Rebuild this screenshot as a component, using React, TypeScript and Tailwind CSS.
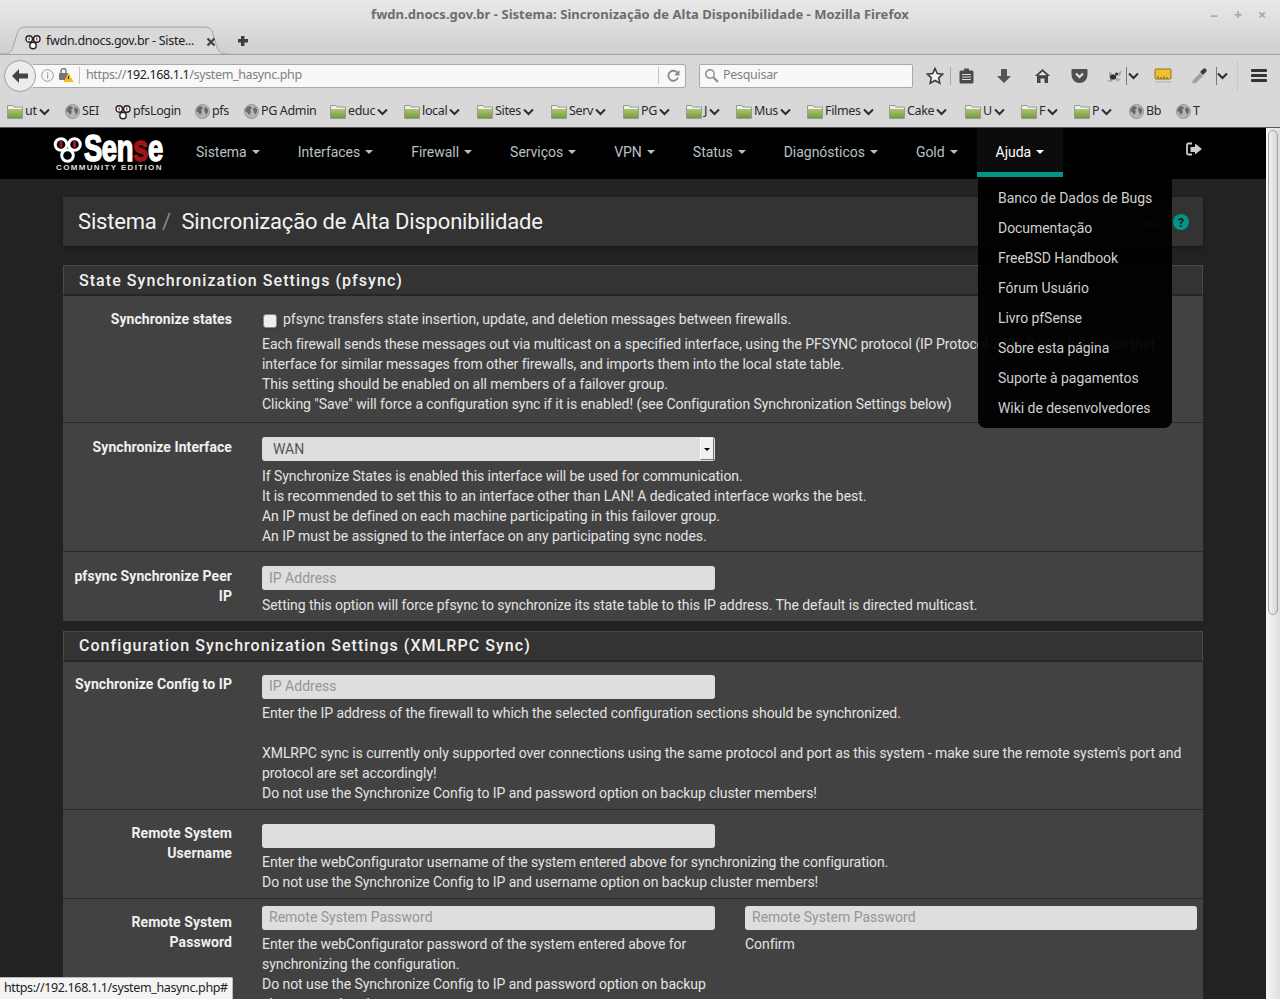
import { Fragment, type ReactNode } from "react";

const bookmarks = [
  { name: "ut", kind: "folder", w: "w-[58px]" },
  { name: "SEI", kind: "globe", w: "w-[50px]" },
  { name: "pfsLogin", kind: "pf", w: "w-[80px]" },
  { name: "pfs", kind: "globe", w: "w-[49px]" },
  { name: "PG Admin", kind: "globe", w: "w-[86px]" },
  { name: "educ", kind: "folder", w: "w-[74px]" },
  { name: "local", kind: "folder", w: "w-[73px]" },
  { name: "Sites", kind: "folder", w: "w-[74px]" },
  { name: "Serv", kind: "folder", w: "w-[72px]" },
  { name: "PG", kind: "folder", w: "w-[63px]" },
  { name: "J", kind: "folder", w: "w-[50px]" },
  { name: "Mus", kind: "folder", w: "w-[71px]" },
  { name: "Filmes", kind: "folder", w: "w-[82px]" },
  { name: "Cake", kind: "folder", w: "w-[76px]" },
  { name: "U", kind: "folder", w: "w-[56px]" },
  { name: "F", kind: "folder", w: "w-[53px]" },
  { name: "P", kind: "folder", w: "w-[55px]" },
  { name: "Bb", kind: "globe", w: "w-[47px]" },
  { name: "T", kind: "globe", w: "w-[30px]" },
];

const navItems = ["Sistema", "Interfaces", "Firewall", "Serviços", "VPN", "Status", "Diagnósticos", "Gold"];

const helpItems = [
  "Banco de Dados de Bugs",
  "Documentação",
  "FreeBSD Handbook",
  "Fórum Usuário",
  "Livro pfSense",
  "Sobre esta página",
  "Suporte à pagamentos",
  "Wiki de desenvolvedores",
];

function Folder() {
  return (
    <svg width="16" height="15" viewBox="0 0 16 15" className="shrink-0">
      <defs>
        <linearGradient id="fold" x1="0" y1="0" x2="0" y2="1">
          <stop offset="0" stopColor="#a9c772" />
          <stop offset="1" stopColor="#76993f" />
        </linearGradient>
      </defs>
      <path d="M0.500 1.500h5.500l1 1.500h8.500v11.500H0.500z" fill="#eeeeea" stroke="#9a9a92" />
      <rect x="1" y="5" width="14" height="9" fill="url(#fold)" />
    </svg>
  );
}

function Globe() {
  return (
    <svg width="15" height="15" viewBox="0 0 15 15" className="shrink-0">
      <circle cx="7.500" cy="7.500" r="7" fill="#b4b4b4" stroke="#828282" strokeWidth="0.700" />
      <path d="M3 3l3-1 2 2-2 2 1 2-2 3-2-3-2-1zM10 3l3 2v3l-2 3-1-3-1-2z" fill="#6a6a6a" />
    </svg>
  );
}

function PfLogo({ size = 16 }: { size?: number }) {
  return (
    <svg width={size} height={size} viewBox="0 0 16 16" className="shrink-0">
      <circle cx="4.200" cy="5" r="3.200" fill="#fff" stroke="#222" strokeWidth="1.400" />
      <circle cx="11.800" cy="5" r="3.200" fill="#fff" stroke="#222" strokeWidth="1.400" />
      <circle cx="8" cy="11.500" r="3.200" fill="#fff" stroke="#222" strokeWidth="1.400" />
      <rect x="3.600" y="3.400" width="1.200" height="3" fill="#b02020" />
      <rect x="11.200" y="3.400" width="1.200" height="3" fill="#b02020" />
    </svg>
  );
}

function Chevron() {
  return (
    <svg width="11" height="8" viewBox="0 0 11 8" className="shrink-0">
      <path d="M1 1.500l4.500 4.500 4.500-4.500" fill="none" stroke="#2c2c2c" strokeWidth="2" />
    </svg>
  );
}

function BrowserChrome() {
  return (
    <div className="font-['Noto_Sans',sans-serif] text-[#333]">
      {/* title + tab strip */}
      <div className="relative h-[55px] border-b border-[#a3a3a3] bg-gradient-to-b from-[#e9e9e9] to-[#cfcfcf]">
        <div className="pt-[6px] text-center text-[13px] leading-[17px] font-bold tracking-[0.03px] text-[#6d6d6d]">
          fwdn.dnocs.gov.br - Sistema: Sincronização de Alta Disponibilidade - Mozilla Firefox
        </div>
        <div className="absolute top-[7px] right-[6px] flex text-[15px] leading-[15px] font-bold text-[#a8a8a8]">
          <span className="w-[24px] text-center">–</span>
          <span className="w-[24px] text-center">+</span>
          <span className="w-[24px] text-center">×</span>
        </div>
        <svg width="230" height="29" viewBox="0 0 230 29" className="absolute top-[26px] left-0">
          <path
            d="M0 28h4c6 0 8-3 10-10l3-10c1-5 4-7 9-7h178c5 0 8 2 9 7l3 10c2 7 4 10 10 10h32"
            fill="#d9d9d9"
            stroke="#a3a3a3"
          />
        </svg>
        <div className="absolute top-[33px] left-[25px] flex h-[17px] items-center text-[12.500px] whitespace-nowrap text-[#222]">
          <PfLogo />
          <span className="ml-[5px] w-[160px] tracking-[-0.3px]">fwdn.dnocs.gov.br - Siste...</span>
          <svg width="10" height="10" viewBox="0 0 10 10">
            <path d="M1.500 1.500l7 7M8.500 1.500l-7 7" stroke="#444" strokeWidth="2.200" />
          </svg>
        </div>
        <svg width="12" height="12" viewBox="0 0 12 12" className="absolute top-[35px] left-[237px]">
          <path d="M4 1h3.400v3H11v3.600H7.400V11H4V7.600H1V4h3z" fill="#3e3e3e" />
        </svg>
      </div>

      {/* url bar row */}
      <div className="flex h-[41px] items-center bg-[#d8d8d8] pr-[12px]">
        <div className="z-10 ml-[4px] flex h-[32px] w-[32px] shrink-0 items-center justify-center rounded-full border border-[#9e9e9e] bg-[#ececec]">
          <svg width="18" height="16" viewBox="0 0 18 16">
            <path d="M8 1L1 8l7 7v-4.500h9v-5H8z" fill="#444" />
          </svg>
        </div>
        <div className="-ml-[3px] flex h-[24px] w-[653px] items-center rounded-r-[3px] border border-l-0 border-[#a9a9a9] bg-[#f8f8f8] pl-[8px] text-[12.500px]">
          <svg width="13" height="13" viewBox="0 0 13 13" className="shrink-0">
            <circle cx="6.500" cy="6.500" r="5.800" fill="none" stroke="#999" />
            <rect x="6" y="5.500" width="1.200" height="4" fill="#999" />
            <rect x="6" y="3.300" width="1.200" height="1.300" fill="#999" />
          </svg>
          <svg width="15" height="15" viewBox="0 0 15 15" className="ml-[5px] shrink-0">
            <rect x="0" y="5" width="9" height="7" rx="1" fill="#777" />
            <path d="M2 5V3a2.500 2.500 0 0 1 5 0v2" fill="none" stroke="#777" strokeWidth="1.400" />
            <path d="M9.500 5l5 9h-10z" fill="#f5b81d" />
            <rect x="9" y="8" width="1" height="3" fill="#333" />
          </svg>
          <span className="ml-[5px] h-[17px] border-l border-[#c4c4c4]" />
          <span className="ml-[6px] w-[572px] tracking-[-0.37px] text-[#808080]">
            https://<span className="text-[#222]">192.168.1.1</span>/system_hasync.php
          </span>
          <span className="h-[17px] border-l border-[#c4c4c4]" />
          <svg width="13" height="13" viewBox="0 0 13 13" className="ml-[8px]">
            <path d="M11 5a5 5 0 1 0 0 3.500" fill="none" stroke="#8a8a8a" strokeWidth="1.800" />
            <path d="M12.500 1v5.500H7z" fill="#8a8a8a" />
          </svg>
        </div>
        <div className="ml-[13px] flex h-[24px] w-[214px] items-center rounded-[2px] border border-[#a9a9a9] bg-[#f8f8f8] pl-[4px] text-[12.500px] tracking-[-0.3px] text-[#808080]">
          <svg width="15" height="15" viewBox="0 0 15 15">
            <circle cx="6" cy="6" r="4.200" fill="none" stroke="#8a8a8a" strokeWidth="1.400" />
            <path d="M9 9l5 5" stroke="#8a8a8a" strokeWidth="2" />
          </svg>
          <span className="ml-[4px]">Pesquisar</span>
        </div>
        <div className="ml-[13px] h-full flex-1">
          <ToolbarIcons />
        </div>
      </div>

      {/* bookmarks */}
      <div className="flex h-[32px] items-center border-b border-[#555] bg-[#d8d8d8] pl-[7px] text-[12.500px] tracking-[-0.35px] text-[#2a2a2a]">
        {bookmarks.map((b) => (
          <div key={b.name} className={`flex shrink-0 items-center gap-[2px] ${b.w}`}>
            {b.kind === "folder" && <Folder />}
            {b.kind === "globe" && <Globe />}
            {b.kind === "pf" && <PfLogo />}
            <span>{b.name}</span>
            {b.kind === "folder" && <Chevron />}
          </div>
        ))}
      </div>
    </div>
  );
}

function ToolbarIcons() {
  return (
    <div className="flex h-full items-center">
      <svg width="18" height="18" viewBox="0 0 18 18" className="shrink-0">
        <path
          d="M9 1.500l2.300 5 5.400.6-4 3.700 1.100 5.400L9 13.500l-4.800 2.700 1.100-5.400-4-3.700 5.400-.6z"
          fill="#f4f4f4"
          stroke="#3c3c3c"
          strokeWidth="1.600"
        />
      </svg>
      <span className="ml-[6px] h-[18px] border-l border-[#a8a8a8]" />
      <svg width="15" height="16" viewBox="0 0 15 16" className="ml-[8px] shrink-0">
        <rect x="0.500" y="2.500" width="14" height="13" rx="1.500" fill="#4a4a4a" />
        <rect x="5" y="0.500" width="5" height="3" fill="#4a4a4a" />
        <path d="M3 6.500h9M3 9h9M3 11.500h9" stroke="#dcdcdc" strokeWidth="1.100" />
      </svg>
      <svg width="16" height="16" viewBox="0 0 16 16" className="ml-[22px] shrink-0">
        <path d="M5 1h6v7h4l-7 7-7-7h4z" fill="#555" />
      </svg>
      <svg width="17" height="16" viewBox="0 0 17 16" className="ml-[22px] shrink-0">
        <path d="M8.500 1L0.800 8h2.200v7h3.500v-4.500h4V15H14V8h2.200z" fill="#444" />
        <path d="M8.500 3.500L4.500 7.200h8z" fill="#e8e8e8" />
      </svg>
      <svg width="17" height="15" viewBox="0 0 17 15" className="ml-[20px] shrink-0">
        <path d="M1.500 1h14a1 1 0 0 1 1 1v5a8 8 0 0 1-16 0V2a1 1 0 0 1 1-1z" fill="#505050" />
        <path d="M5 5.500l3.500 3.500L12 5.500" fill="none" stroke="#e6e6e6" strokeWidth="2" />
      </svg>
      <svg width="17" height="14" viewBox="0 0 17 14" className="ml-[18px] shrink-0">
        <path d="M9 6l7-5-2 6zM8 6L3 2l0 5zM9 9l6 1-4 3zM7 9l-6 3 5 1z" fill="#a8a8a8" />
        <ellipse cx="7" cy="8" rx="3.200" ry="2.600" fill="#2f2f2f" />
        <circle cx="10.500" cy="5" r="1.500" fill="#2f2f2f" />
      </svg>
      <span className="ml-[3px] h-[18px] border-l border-[#777]" />
      <span className="ml-[1px]">
        <Chevron />
      </span>
      <svg width="18" height="15" viewBox="0 0 18 15" className="ml-[15px] shrink-0">
        <rect x="1" y="1" width="16" height="10" rx="1" fill="#f2bf2e" stroke="#8c7426" />
        <path d="M4 11V8M7 11V9M10 11V8M13 11V9" stroke="#7a5b0e" />
        <rect x="1" y="13" width="16" height="1.500" fill="#bbb" />
      </svg>
      <svg width="18" height="18" viewBox="0 0 18 18" className="ml-[19px] shrink-0">
        <path d="M2 16l-1 1 1-4 7-7 3 3-7 7z" fill="#a0a0a0" />
        <path d="M9 5l3-3c1-1 2-1 3 0s1 2 0 3l-3 3z" fill="#3c3c3c" />
      </svg>
      <span className="ml-[7px] h-[18px] border-l border-[#777]" />
      <Chevron />
      <span className="ml-[9px] h-[30px] border-l border-[#c6c6c6]" />
      <div className="ml-[13px] flex flex-col gap-[2px]">
        <div className="h-[3px] w-[16px] rounded-[1px] bg-[#333]" />
        <div className="h-[3px] w-[16px] rounded-[1px] bg-[#333]" />
        <div className="h-[3px] w-[16px] rounded-[1px] bg-[#333]" />
      </div>
    </div>
  );
}

function Caret() {
  return <span className="ml-[5px] inline-block border-x-[4px] border-t-[4px] border-x-transparent border-t-current align-middle" />;
}

function Navbar() {
  return (
    <div className="flex h-[51px] bg-black text-[14px] tracking-[-0.03px] text-[#b8c0c4]">
      <div className="flex w-[177px] shrink-0 justify-end pr-[14px]">
        <div className="relative h-full w-[110px] shrink-0">
          <svg width="30" height="28" viewBox="0 0 30 28" className="absolute top-[8px] left-0">
            <circle cx="8" cy="8.500" r="5.800" fill="none" stroke="#fff" strokeWidth="3" />
            <circle cx="21.500" cy="8.500" r="5.800" fill="none" stroke="#fff" strokeWidth="3" />
            <circle cx="14.500" cy="19.500" r="5.800" fill="none" stroke="#fff" strokeWidth="3" />
            <rect x="6.500" y="5" width="3" height="6.500" fill="#a01515" />
            <rect x="20" y="5" width="3" height="6.500" fill="#a01515" />
          </svg>
          <span className="absolute top-[8px] left-[31px] origin-left scale-x-[0.76] font-['Liberation_Sans',sans-serif] text-[36px] leading-[26px] font-bold tracking-[-0.500px] text-white [-webkit-text-stroke:1.500px_white]">
            Sen<span className="text-[#a01515] [-webkit-text-stroke:1.500px_#a01515]">s</span>e
          </span>
          <span className="absolute top-[35px] left-[3px] font-['Liberation_Sans',sans-serif] text-[8px] leading-[10px] font-bold tracking-[1.35px] whitespace-nowrap text-[#ddd]">
            COMMUNITY EDITION
          </span>
        </div>
      </div>
      {navItems.map((item) => (
        <div key={item} className="flex h-full items-center px-[19px] pb-[3px]">
          {item}
          <Caret />
        </div>
      ))}
      <div className="flex h-[49px] items-center border-b-[5px] border-[#009688] bg-[#0c0c0c] px-[19px] pt-[4px] text-white">
        Ajuda
        <Caret />
      </div>
      <div className="ml-auto pt-[14px] pr-[64px]">
        <svg width="16" height="15" viewBox="0 0 16 15">
          <path d="M6 1.500H2.500a1.500 1.500 0 0 0-1.500 1.500v8a1.500 1.500 0 0 0 1.500 1.500H6" fill="none" stroke="#ccc" strokeWidth="1.800" />
          <path d="M9 1.500L16 7l-7 5.500V10H4.500V5H9z" fill="#ccc" />
        </svg>
      </div>
    </div>
  );
}

function Input({ placeholder = "", className = "w-[453px] leading-[24px]" }: { placeholder?: string; className?: string }) {
  return (
    <div className={`h-[24px] rounded-[3px] bg-[#dedede] pl-[7px] text-[14px] tracking-normal text-[#969696] ${className}`}>
      {placeholder}
    </div>
  );
}

function Row({
  label,
  children,
  className = "",
  labelPt = "pt-[14px]",
  bodyPt = "pt-[14px]",
}: {
  label: ReactNode;
  children: ReactNode;
  className?: string;
  labelPt?: string;
  bodyPt?: string;
}) {
  return (
    <div className={`flex border-t border-[#2a2a2a] ${className}`}>
      <div className={`w-[169px] shrink-0 text-right font-bold tracking-[0.07px] text-[#f0f0f0] ${labelPt}`}>{label}</div>
      <div className={`min-w-0 flex-1 pl-[30px] ${bodyPt}`}>{children}</div>
    </div>
  );
}

function Lines({ lines }: { lines: string[] }) {
  return (
    <>
      {lines.map((line, i) => (
        <Fragment key={i}>
          {line}
          {i < lines.length - 1 && <br />}
        </Fragment>
      ))}
    </>
  );
}

function PanelHeader({ children, className = "h-[31px] leading-[29px]" }: { children: ReactNode; className?: string }) {
  return (
    <div className={`border border-b-2 border-[#4a4a4a] border-b-[#262626] bg-[#333] pl-[15px] text-[16px] font-medium tracking-[1.05px] text-[#f0f0f0] ${className}`}>
      {children}
    </div>
  );
}

function PageContent() {
  return (
    <div className="relative h-full flex-1 overflow-hidden bg-[#222] font-['Roboto',sans-serif] text-[14px] leading-[20px] tracking-[-0.06px] text-[#e2e2e2]">
      <Navbar />
      <div className="ml-[63px] w-[1140px] pt-[18px]">
        {/* breadcrumb */}
        <div className="flex h-[49px] items-center justify-between bg-[#333] pr-[14px] pl-[15px] text-[22px] tracking-[-0.18px] text-[#f2f2f2] shadow-[0_2px_4px_rgba(0,0,0,0.35)]">
          <div>
            Sistema <span className="text-[#8a8a8a]">/</span>&nbsp; Sincronização de Alta Disponibilidade
          </div>
          <div className="flex items-center gap-[13px]">
            <svg width="18" height="15" viewBox="0 0 18 15">
              <path d="M0 14h18M2 8h2.500v5H2zM6 5h2.500v8H6zM10 7h2.500v6H10zM14 3h2.500v10H14z" fill="#009688" stroke="#009688" strokeWidth="0.500" />
            </svg>
            <svg width="16" height="16" viewBox="0 0 16 16">
              <circle cx="8" cy="8" r="8" fill="#009688" />
              <text x="8" y="12.500" textAnchor="middle" fontSize="12" fontWeight="900" fill="#222" fontFamily="Roboto, sans-serif">?</text>
            </svg>
          </div>
        </div>

        {/* pfsync panel */}
        <div className="mt-[19px]">
          <PanelHeader>State Synchronization Settings (pfsync)</PanelHeader>
          <div className="bg-[#424242]">
            <Row label="Synchronize states" className="h-[126px] border-t-0" labelPt="pt-[13px]" bodyPt="pt-[13px]">
              <div className="flex h-[25px] items-start">
                <span className="mt-[5px] ml-[1px] h-[14px] w-[14px] shrink-0 rounded-[3px] border border-[#888] bg-[#eee] shadow-sm" />
                <span className="pl-[6px] tracking-[-0.02px]">pfsync transfers state insertion, update, and deletion messages between firewalls.</span>
              </div>
              <div className="whitespace-nowrap">
                <Lines
                  lines={[
                    "Each firewall sends these messages out via multicast on a specified interface, using the PFSYNC protocol (IP Protocol 240). It also listens on that",
                    "interface for similar messages from other firewalls, and imports them into the local state table.",
                    "This setting should be enabled on all members of a failover group.",
                    'Clicking "Save" will force a configuration sync if it is enabled! (see Configuration Synchronization Settings below)',
                  ]}
                />
              </div>
            </Row>
            <Row label="Synchronize Interface" className="h-[129px]">
              <div className="flex h-[24px] w-[453px] items-center justify-between rounded-[3px] bg-[#dedede] pr-[1px] pl-[11px] text-[14px] text-[#555]">
                <span>WAN</span>
                <span className="flex h-[22px] w-[14px] items-center justify-center border border-[#777] border-t-white border-l-white bg-[#f0f0f0]">
                  <span className="border-x-[3px] border-t-[3px] border-x-transparent border-t-black" />
                </span>
              </div>
              <div className="pt-[5px]">
                <Lines
                  lines={[
                    "If Synchronize States is enabled this interface will be used for communication.",
                    "It is recommended to set this to an interface other than LAN! A dedicated interface works the best.",
                    "An IP must be defined on each machine participating in this failover group.",
                    "An IP must be assigned to the interface on any participating sync nodes.",
                  ]}
                />
              </div>
            </Row>
            <Row
              label={
                <>
                  pfsync Synchronize Peer
                  <br />
                  IP
                </>
              }
              className="h-[70px]"
            >
              <Input placeholder="IP Address" />
              <div className="pt-[5px]">
                Setting this option will force pfsync to synchronize its state table to this IP address. The default is directed multicast.
              </div>
            </Row>
          </div>
        </div>

        {/* xmlrpc panel */}
        <div className="mt-[10px]">
          <PanelHeader className="h-[31px] leading-[27px]">Configuration Synchronization Settings (XMLRPC Sync)</PanelHeader>
          <div className="bg-[#424242]">
            <Row label="Synchronize Config to IP" className="h-[147px] border-t-0" labelPt="pt-[12px]" bodyPt="pt-[13px]">
              <Input placeholder="IP Address" className="w-[453px] leading-[22px]" />
              <div className="pt-[4px]">
                <Lines
                  lines={[
                    "Enter the IP address of the firewall to which the selected configuration sections should be synchronized.",
                    "\u00a0",
                    "XMLRPC sync is currently only supported over connections using the same protocol and port as this system - make sure the remote system's port and",
                    "protocol are set accordingly!",
                    "Do not use the Synchronize Config to IP and password option on backup cluster members!",
                  ]}
                />
              </div>
            </Row>
            <Row
              label={
                <>
                  Remote System
                  <br />
                  Username
                </>
              }
              className="h-[89px]"
              labelPt="pt-[13px]"
            >
              <Input />
              <div className="pt-[4px]">
                <Lines
                  lines={[
                    "Enter the webConfigurator username of the system entered above for synchronizing the configuration.",
                    "Do not use the Synchronize Config to IP and username option on backup cluster members!",
                  ]}
                />
              </div>
            </Row>
            <Row
              label={
                <>
                  Remote System
                  <br />
                  Password
                </>
              }
              className="h-[120px]"
              labelPt="pt-[13px]"
              bodyPt="pt-[7px]"
            >
              <div className="flex gap-[30px]">
                <div className="w-[453px] shrink-0">
                  <Input placeholder="Remote System Password" className="w-[453px] leading-[22px]" />
                  <div className="pt-[4px]">
                    Enter the webConfigurator password of the system entered above for synchronizing the configuration.
                    <br />
                    Do not use the Synchronize Config to IP and password option on backup cluster members!
                  </div>
                </div>
                <div className="w-[452px] shrink-0">
                  <Input placeholder="Remote System Password" className="w-[452px] leading-[22px]" />
                  <div className="pt-[4px]">Confirm</div>
                </div>
              </div>
            </Row>
          </div>
        </div>
      </div>

      {/* open help dropdown */}
      <div className="absolute top-[51px] left-[978px] h-[249px] w-[194px] rounded-b-[8px] bg-black/95 pt-[4px] pl-[20px] tracking-[-0.05px] text-[#d0d0d0]">
        {helpItems.map((item) => (
          <div key={item} className="h-[30px] leading-[30px]">
            {item}
          </div>
        ))}
      </div>
    </div>
  );
}

function Scrollbar() {
  return (
    <div className="h-full w-[14px] shrink-0 bg-gradient-to-r from-[#f7f7f7] to-[#dedede] pt-[2px] pl-[2px]">
      <div className="h-[485px] w-[10px] rounded-[5px] border border-[#a0a0a0] bg-gradient-to-r from-[#f2f2f2] to-[#d6d6d6]" />
    </div>
  );
}

export default function App() {
  return (
    <div className="relative h-[999px] w-[1280px] overflow-hidden">
      <BrowserChrome />
      <div className="flex h-[871px]">
        <PageContent />
        <Scrollbar />
      </div>
      <div className="absolute bottom-0 left-0 h-[22px] w-[233px] rounded-tr-[2px] border-t border-r border-[#bbb] bg-[#f4f4f4] pl-[4px] font-['Noto_Sans',sans-serif] text-[12.500px] leading-[20px] tracking-[-0.36px] text-[#222]">
        https://192.168.1.1/system_hasync.php#
      </div>
    </div>
  );
}
